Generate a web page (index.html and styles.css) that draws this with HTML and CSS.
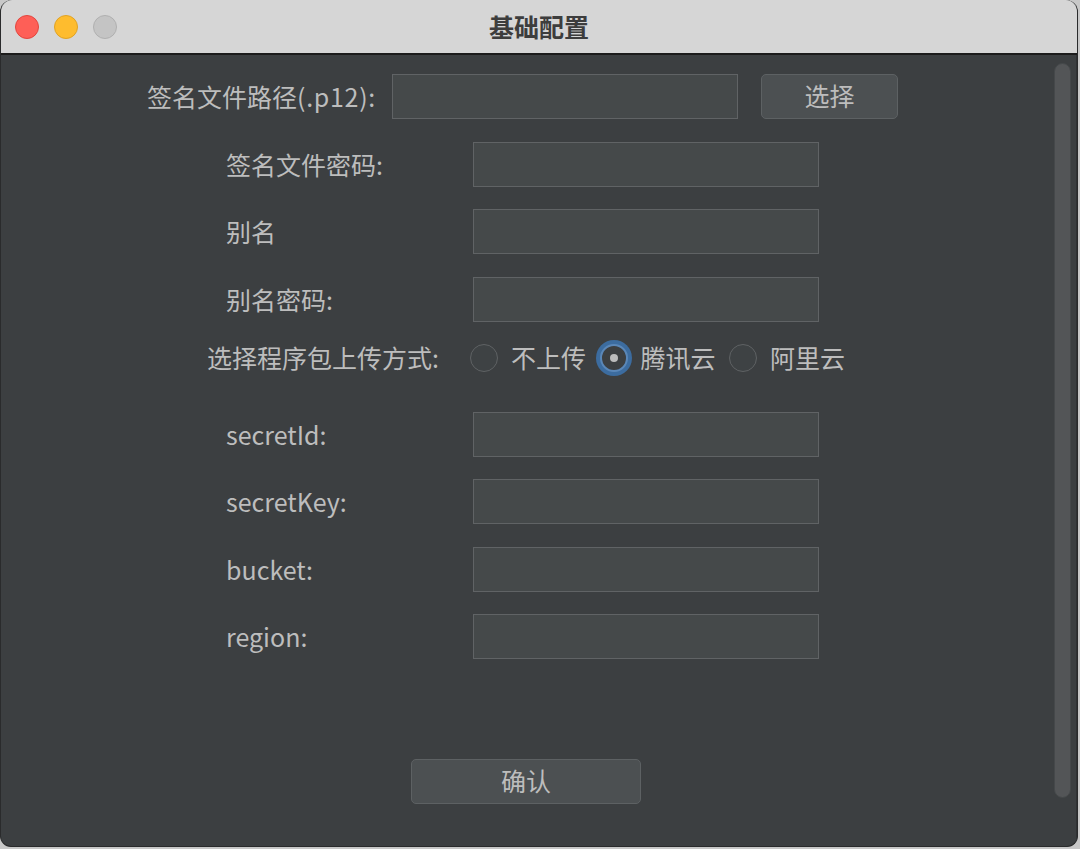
FILE: index.html
```html
<!DOCTYPE html>
<html lang="zh-CN">
<head>
<meta charset="utf-8">
<title>基础配置</title>
<link rel="stylesheet" href="styles.css">
</head>
<body>
<div class="window">
  <div class="titlebar">
    <div class="lights">
      <span class="light red"></span>
      <span class="light yellow"></span>
      <span class="light gray"></span>
    </div>
    <div class="title">基础配置</div>
    <div class="spacer"></div>
  </div>
  <div class="content">
    <div class="form">
      <div class="row row-file">
        <label class="label">签名文件路径<span class="latin">(.p12):</span></label>
        <div class="field"></div>
        <button class="btn btn-pick">选择</button>
      </div>
      <div class="row">
        <label class="label">签名文件密码:</label>
        <div class="field"></div>
      </div>
      <div class="row">
        <label class="label">别名</label>
        <div class="field"></div>
      </div>
      <div class="row">
        <label class="label">别名密码:</label>
        <div class="field"></div>
      </div>
      <div class="row row-radio">
        <label class="label">选择程序包上传方式:</label>
        <div class="radios">
          <div class="radio"><span class="dot-box"></span><span class="rtext">不上传</span></div>
          <div class="radio selected"><span class="dot-box"></span><span class="rtext">腾讯云</span></div>
          <div class="radio"><span class="dot-box"></span><span class="rtext">阿里云</span></div>
        </div>
      </div>
      <div class="row">
        <label class="label">secretId:</label>
        <div class="field"></div>
      </div>
      <div class="row">
        <label class="label">secretKey:</label>
        <div class="field"></div>
      </div>
      <div class="row">
        <label class="label">bucket:</label>
        <div class="field"></div>
      </div>
      <div class="row">
        <label class="label">region:</label>
        <div class="field"></div>
      </div>
      <div class="row row-confirm">
        <button class="btn btn-confirm">确认</button>
      </div>
    </div>
    <div class="scroll"><div class="thumb"></div></div>
  </div>
</div>
</body>
</html>
```
FILE: styles.css
```css
* { box-sizing: border-box; }
html, body { margin: 0; padding: 0; }
body {
  width: 1080px;
  height: 849px;
  background: #c8c8c8;
  font-family: "Noto Sans CJK SC", "Noto Sans", sans-serif;
  overflow: hidden;
}
.window {
  width: 1078px;
  height: 847px;
  border-radius: 12px 12px 11px 11px;
  overflow: hidden;
  background: #3c3f41;
  border: 1px solid #2a2b2c;
  border-top: none;
  display: flex;
  flex-direction: column;
}
.titlebar {
  height: 55px;
  flex: none;
  background: #d6d6d6;
  border-bottom: 2px solid #1c1c1c;
  display: grid;
  grid-template-columns: 1fr auto 1fr;
  align-items: center;
  margin: 0 -1px;
  padding-top: 1px;
}
.lights {
  display: flex;
  gap: 15px;
  padding-left: 15px;
}
.light {
  width: 24px;
  height: 24px;
  border-radius: 50%;
  border: 1px solid transparent;
}
.light.red { background: #fe5f57; border-color: #e2463f; }
.light.yellow { background: #febc2e; border-color: #e0a325; }
.light.gray { background: #c4c4c4; border-color: #b0b0b0; }
.title {
  font-size: 25px;
  font-weight: 700;
  color: #3d3d3d;
  line-height: 1;
  padding-bottom: 1px;
}
.content {
  flex: 1;
  display: flex;
  min-height: 0;
}
.form {
  flex: 1;
  display: flex;
  flex-direction: column;
  gap: 22.5px;
  padding-top: 19px;
}
.row {
  display: flex;
  align-items: center;
  height: 45px;
  padding-left: 225px;
}
.label {
  width: 247px;
  flex: none;
  color: #bdbdbd;
  font-size: 25px;
  line-height: 1;
  white-space: nowrap;
}
.latin { letter-spacing: 0.7px; }
.field {
  width: 346px;
  height: 45px;
  background: #45494a;
  border: 1.5px solid #606365;
}
.row-file { padding-left: 146px; }
.row-file .label { width: 245px; }
.btn {
  font-family: inherit;
  height: 45px;
  background: #4c5052;
  border: 1.5px solid #5d6163;
  border-radius: 5px;
  color: #bdbdbd;
  font-size: 25px;
  line-height: 1;
  padding: 0 0 2px;
}
.btn-pick {
  width: 137px;
  margin-left: 23px;
}
.row-radio {
  height: 36px;
  padding-left: 206px;
  margin-top: -4.5px;
  margin-bottom: 13.5px;
}
.row-radio .label { width: 263px; }
.radios {
  display: flex;
  align-items: center;
  gap: 13.5px;
}
.radio {
  display: flex;
  align-items: center;
  gap: 13px;
}
.dot-box {
  width: 28px;
  height: 28px;
  border-radius: 50%;
  background: #3e4244;
  border: 1.5px solid #5f6264;
  display: flex;
  align-items: center;
  justify-content: center;
}
.radio.selected .dot-box {
  background: #3c3f41;
  border: 2px solid #5a87b8;
  box-shadow: 0 0 0 4px #3c6c9f;
}
.radio.selected .dot-box::after {
  content: "";
  width: 8px;
  height: 8px;
  border-radius: 50%;
  background: #bcbcbc;
}
.rtext {
  color: #bdbdbd;
  font-size: 25px;
  line-height: 1;
}
.row-confirm {
  padding-left: 410px;
  margin-top: 77.5px;
}
.btn-confirm { width: 230px; }
.scroll {
  width: 26px;
  flex: none;
  padding: 8px 5px 0 3px;
  border-right: 1px solid #303234;
}
.thumb {
  width: 17px;
  height: 735px;
  border-radius: 9px;
  background: #535557;
  border: 1px solid #45484a;
}
```
